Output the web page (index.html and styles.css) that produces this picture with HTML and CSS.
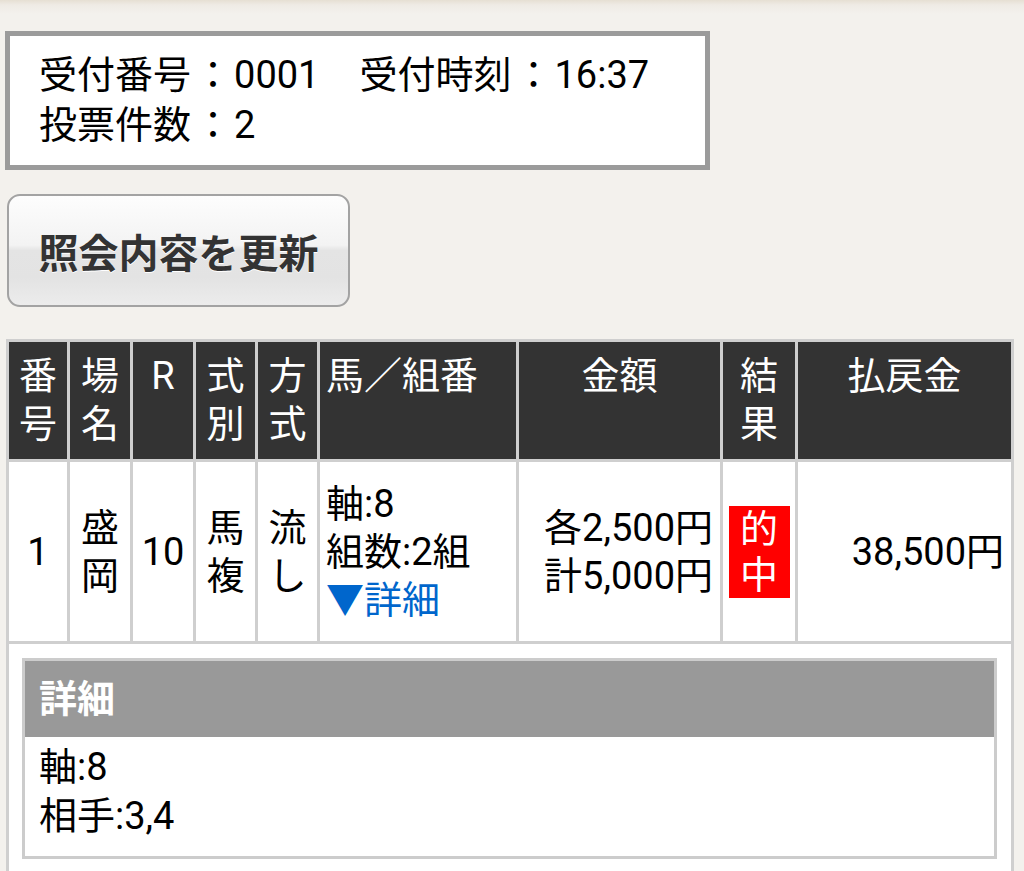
FILE: index.html
```html
<!DOCTYPE html>
<html lang="ja">
<head>
<meta charset="utf-8">
<title>照会結果</title>
<link rel="stylesheet" href="styles.css">
</head>
<body>
<div class="page">
  <div class="info">
    <div class="info-line">受付番号<span class="colon">：</span>0001<span class="gap"></span>受付時刻<span class="colon">：</span>16:37</div>
    <div class="info-line">投票件数<span class="colon">：</span>2</div>
  </div>

  <button class="refresh" type="button">照会内容を更新</button>

  <table class="bets">
    <colgroup>
      <col class="c-no">
      <col class="c-place">
      <col class="c-race">
      <col class="c-type">
      <col class="c-method">
      <col class="c-combo">
      <col class="c-amount">
      <col class="c-result">
      <col class="c-payout">
    </colgroup>
    <thead>
      <tr>
        <th>番号</th>
        <th>場名</th>
        <th>R</th>
        <th>式別</th>
        <th>方式</th>
        <th class="left">馬／組番</th>
        <th>金額</th>
        <th>結果</th>
        <th>払戻金</th>
      </tr>
    </thead>
    <tbody>
      <tr class="bet-row">
        <td class="center">1</td>
        <td class="center">盛<br>岡</td>
        <td class="center">10</td>
        <td class="center">馬<br>複</td>
        <td class="center">流<br>し</td>
        <td class="left">軸:8<br>組数:2組<br><span class="more">▼詳細</span></td>
        <td class="right">各2,500円<br>計5,000円</td>
        <td class="center"><span class="hit">的<br>中</span></td>
        <td class="right">38,500円</td>
      </tr>
      <tr class="detail-row">
        <td colspan="9">
          <div class="detail">
            <div class="detail-head">詳細</div>
            <div class="detail-body">軸:8<br>相手:3,4</div>
          </div>
        </td>
      </tr>
    </tbody>
  </table>
</div>
</body>
</html>
```

FILE: styles.css
```css
html, body {
  margin: 0;
  padding: 0;
  height: 871px;
  overflow: hidden;
}

body {
  background-color: #f3f1ed;
  background-image: linear-gradient(#e6dfd3 0px, #efebe5 5px, #f3f1ed 14px);
  background-repeat: no-repeat;
  background-size: 100% 14px;
  font-family: Roboto, "Noto Sans CJK JP", sans-serif;
  font-size: 38px;
  color: #000;
}

.page {
  padding-top: 31px;
}

.info {
  box-sizing: border-box;
  width: 705px;
  margin-left: 5px;
  border: 5px solid #9b9b9b;
  background: #fff;
  padding: 14px 0 15px 29px;
  line-height: 50px;
}

.colon {
  display: inline-block;
  margin: 0 2px 0 3px;
}

.gap {
  display: inline-block;
  width: 40px;
}

.refresh {
  display: block;
  box-sizing: border-box;
  width: 343px;
  height: 113px;
  margin: 24px 0 0 7px;
  padding: 0;
  border: 2px solid #a3a3a3;
  border-radius: 13px;
  background: linear-gradient(#fdfdfd 0%, #f3f3f3 45%, #e4e4e4 50%, #e3e3e3 75%, #ececec 100%);
  font-family: Roboto, "Noto Sans CJK JP", sans-serif;
  font-size: 40px;
  font-weight: 700;
  color: #333;
  text-shadow: 0 1px 0 #fff;
}

.bets {
  margin: 32px 0 0 6px;
  width: 1005px;
  table-layout: fixed;
  border-collapse: collapse;
  line-height: 48px;
}

.c-no { width: 61px; }
.c-place { width: 63px; }
.c-race { width: 63px; }
.c-type { width: 62px; }
.c-method { width: 62px; }
.c-combo { width: 199px; }
.c-amount { width: 204px; }
.c-result { width: 75px; }
.c-payout { width: 216px; }

.bets th,
.bets td {
  border: 3px solid #cfcfcf;
}

.bets th {
  background: #333;
  color: #fff;
  font-weight: 400;
  vertical-align: top;
  text-align: center;
  padding: 10px 4px 11px;
}

.bets td {
  background: #fff;
  vertical-align: middle;
  padding: 18px 4px 17px;
}

.bets .left {
  text-align: left;
  padding-left: 6px;
}

.bets .center {
  text-align: center;
}

.bets .right {
  text-align: right;
  padding-right: 7px;
}

.more {
  color: #0066cc;
}

.hit {
  display: inline-block;
  width: 61px;
  background: #ff0000;
  color: #fff;
  line-height: 46px;
  text-align: center;
}

.detail-row td {
  padding: 14px 14px 14px 13px;
}

.detail {
  border: 3px solid #cccccc;
  background: #fff;
}

.detail-head {
  background: #999;
  color: #fff;
  font-weight: 700;
  height: 76px;
  line-height: 76px;
  padding-left: 14px;
}

.detail-body {
  padding: 6px 0 15px 14px;
  line-height: 49px;
}
```
